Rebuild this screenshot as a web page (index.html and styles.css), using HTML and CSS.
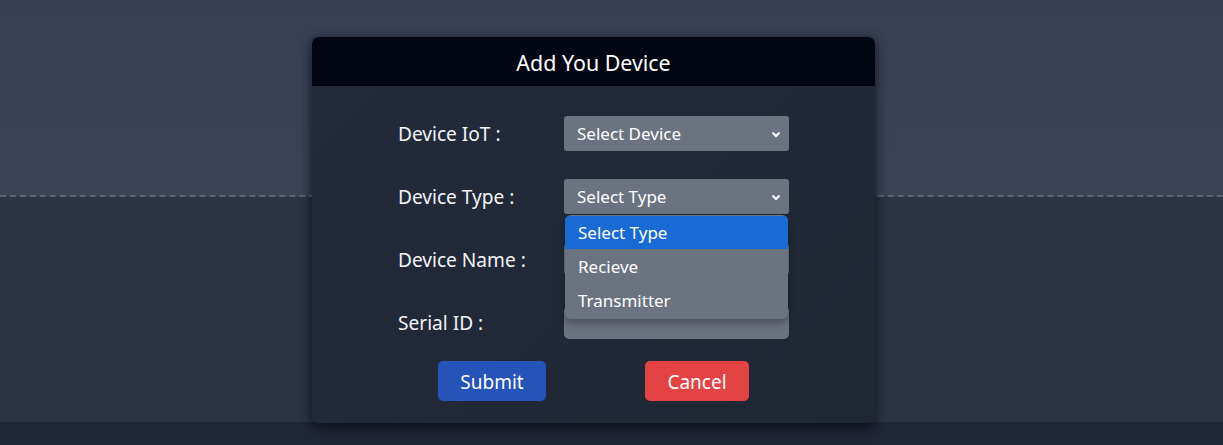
FILE: index.html
```html
<!DOCTYPE html>
<html lang="en">
<head>
<meta charset="utf-8">
<title>Add You Device</title>
<link rel="stylesheet" href="styles.css">
</head>
<body>
<div class="page">
  <header class="page-top"></header>
  <section class="page-mid"></section>
  <footer class="page-bottom"></footer>
</div>

<div class="modal">
  <div class="modal-header">Add You Device</div>
  <form class="modal-body">
    <div class="form-grid">
      <label class="label">Device IoT :</label>
      <div class="field select">
        <span>Select Device</span>
        <svg class="chev" width="10" height="7" viewBox="0 0 10 7"><path d="M1.5 1.5 L5 5 L8.5 1.5" fill="none" stroke="#fff" stroke-width="2.2"/></svg>
      </div>

      <label class="label">Device Type :</label>
      <div class="field select type">
        <span>Select Type</span>
        <svg class="chev" width="10" height="7" viewBox="0 0 10 7"><path d="M1.5 1.5 L5 5 L8.5 1.5" fill="none" stroke="#fff" stroke-width="2.2"/></svg>
        <ul class="dropdown">
          <li class="opt active">Select Type</li>
          <li class="opt">Recieve</li>
          <li class="opt">Transmitter</li>
        </ul>
      </div>

      <label class="label">Device Name :</label>
      <div class="field input"></div>

      <label class="label">Serial ID :</label>
      <div class="field input"></div>
    </div>
    <div class="actions">
      <button type="button" class="btn submit">Submit</button>
      <button type="button" class="btn cancel">Cancel</button>
    </div>
  </form>
</div>
</body>
</html>
```

FILE: styles.css
```css
* { box-sizing: border-box; }
html, body { margin: 0; padding: 0; }
body {
  font-family: "Noto Sans", "Open Sans", sans-serif;
  background: #202737;
  width: 1223px;
  height: 445px;
  overflow: hidden;
  position: relative;
}
.page { display: flex; flex-direction: column; height: 445px; }
.page-top {
  height: 197px;
  background: linear-gradient(180deg, #384154 0%, #3b4457 100%);
  border-bottom: 2px dashed #5b6374;
}
.page-mid { height: 225px; background: #2c3444; }
.page-bottom { flex: 1; background: #202737; }

.modal {
  position: absolute;
  left: 312px;
  top: 37px;
  width: 563px;
  height: 386px;
  border-radius: 7px;
  background: linear-gradient(135deg, #232b3b 0%, #1f2735 100%);
  box-shadow: 0 6px 14px rgba(5, 8, 18, 0.55), 0 0 8px rgba(10, 14, 25, 0.35);
  color: #fff;
}
.modal-header {
  height: 49px;
  background: #020612;
  border-radius: 7px 7px 0 0;
  display: flex;
  align-items: center;
  justify-content: center;
  font-size: 21.4px;
  padding-top: 1px;
}
.modal-body {
  padding: 30px 0 22px;
  display: flex;
  flex-direction: column;
  align-items: center;
}
.form-grid {
  display: grid;
  grid-template-columns: 166px 225px;
  grid-auto-rows: 35px;
  row-gap: 28px;
  align-items: center;
}
.label {
  font-size: 19.1px;
  color: #f3f4f6;
}
.field {
  height: 35px;
  background: #6b7280;
  border-radius: 3px;
  position: relative;
}
.field.input { height: 33px; border-radius: 5px; }
.select {
  display: flex;
  align-items: center;
  justify-content: space-between;
  padding: 0 8px 0 13px;
  font-size: 17px;
  color: #fff;
}
.chev { margin-top: 1px; }
.dropdown {
  position: absolute;
  left: 1px;
  right: 1px;
  top: 36px;
  margin: 0;
  padding: 1px 0 2px;
  list-style: none;
  background: #6b7280;
  border-radius: 6px;
  box-shadow: 0 4px 8px rgba(0, 0, 0, 0.3);
  z-index: 2;
  overflow: hidden;
}
.opt {
  height: 34px;
  display: flex;
  align-items: center;
  padding-left: 13px;
  font-size: 17px;
  color: #fff;
}
.opt.active { background: #1a6ad6; height: 33px; }

.actions {
  margin-top: 21px;
  display: flex;
  gap: 99px;
}
.btn {
  height: 40px;
  border: 0;
  border-radius: 5px;
  color: #fff;
  font-family: inherit;
  font-size: 19px;
  padding: 2px 0 0;
}
.submit { width: 108px; background: #2553b8; }
.cancel { width: 104px; background: #e34343; }
```
